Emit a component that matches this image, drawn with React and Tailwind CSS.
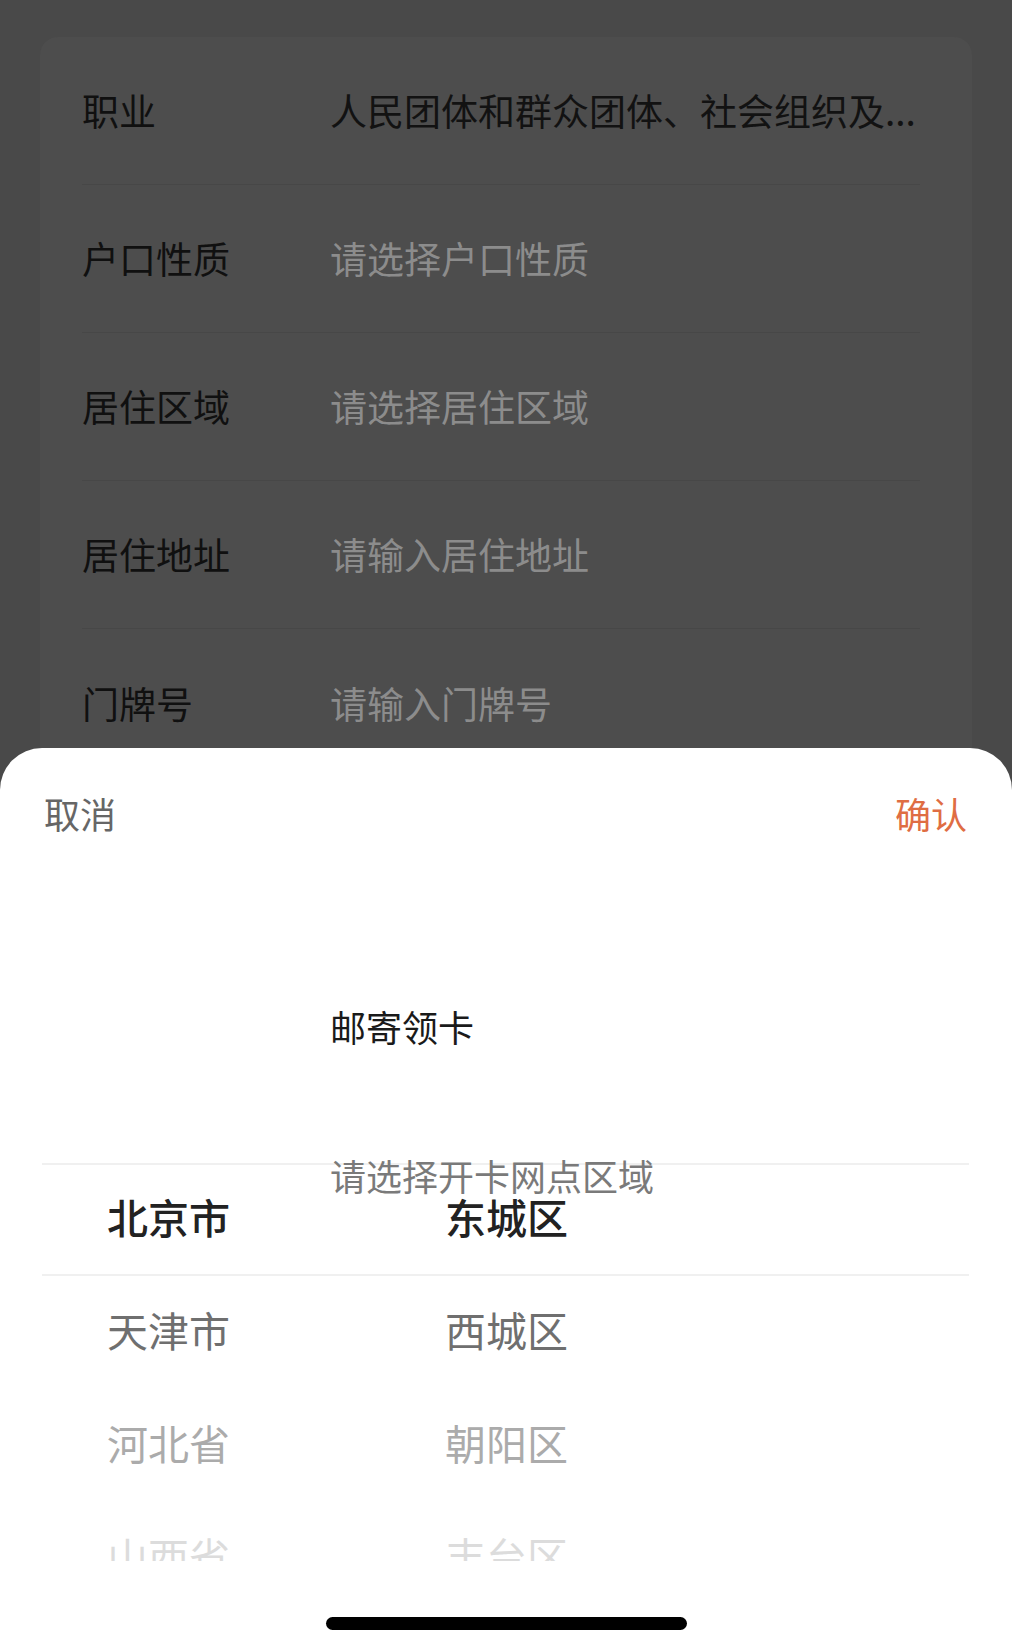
const formRows = [
  { label: '职业', value: '人民团体和群众团体、社会组织及...', filled: true },
  { label: '户口性质', value: '请选择户口性质' },
  { label: '居住区域', value: '请选择居住区域' },
  { label: '居住地址', value: '请输入居住地址' },
  { label: '门牌号', value: '请输入门牌号' },
];

const pickerRows = [
  { left: '北京市', right: '东城区', cls: 'text-[#222222] font-medium' },
  { left: '天津市', right: '西城区', cls: 'text-[#6f6f6f]' },
  { left: '河北省', right: '朝阳区', cls: 'text-[#ababab]' },
  { left: '山西省', right: '丰台区', cls: 'text-[#dcdcdc]' },
];

const App = () => {
  return (
    <div className="relative w-[1012px] h-[1649px] overflow-hidden bg-[#494949] font-['Noto_Sans_CJK_SC',sans-serif]">
      {/* form behind the mask */}
      <div className="mx-[40px] mt-[37px] rounded-t-[18px] bg-[#4d4d4d] pl-[42px] pr-[52px]">
        {formRows.map((row, i) => (
          <div
            key={row.label}
            className={`flex items-center h-[148px] ${i < formRows.length - 1 ? 'border-b border-[#474747]' : ''}`}
          >
            <div className="w-[248px] shrink-0 text-[37px] leading-none text-[#101010]">{row.label}</div>
            <div
              className={`whitespace-nowrap text-[37px] leading-none ${row.filled ? 'text-[#121212]' : 'text-[#8c8c8c]'}`}
            >
              {row.value}
            </div>
          </div>
        ))}
      </div>

      {/* bottom sheet */}
      <div className="absolute left-0 right-0 top-[748px] bottom-0 rounded-t-[42px] bg-white flex flex-col">
        <div className="h-[134px] pb-[4px] flex items-center justify-between pl-[44px] pr-[45px] text-[36px] leading-none">
          <span className="text-[#666666]">取消</span>
          <span className="text-[#df6d43]">确认</span>
        </div>

        <div className="h-[224px] pt-[126px] pl-[330px]">
          <span className="text-[36px] leading-none text-[#1a1a1a]">邮寄领卡</span>
        </div>

        <div className="relative h-[455px] overflow-hidden pt-[57px]">
          <div className="absolute top-[57px] left-[42px] right-[43px] h-[113px] border-y-2 border-[#f0f0f0]" />
          <div className="absolute top-[51px] left-[330px] text-[36px] leading-none text-[#7a7a7a]">
            请选择开卡网点区域
          </div>
          {pickerRows.map((row) => (
            <div key={row.left} className={`flex items-center h-[113px] pb-[7px] pl-[107px] text-[41px] leading-none ${row.cls}`}>
              <span className="w-[338px] shrink-0">{row.left}</span>
              <span>{row.right}</span>
            </div>
          ))}
        </div>

        <div className="mt-[56px] mx-auto w-[361px] h-[13px] rounded-full bg-black" />
      </div>
    </div>
  );
};

export default App;
